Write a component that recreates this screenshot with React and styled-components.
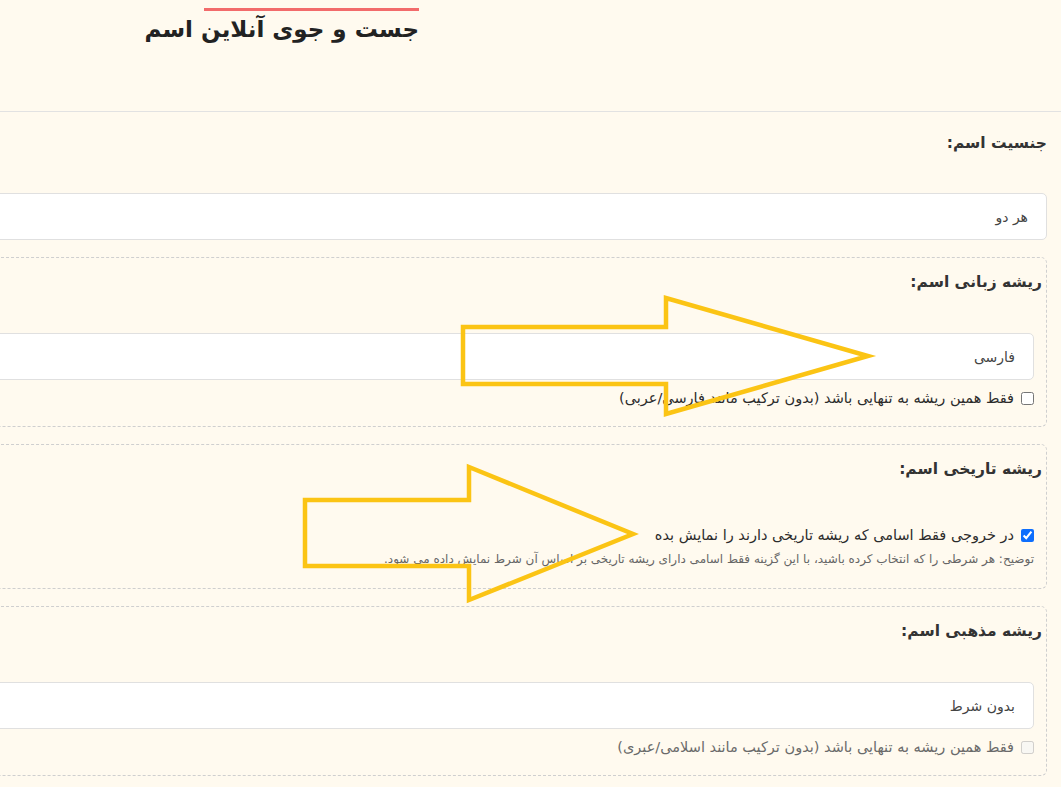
import React from "react";
import styled, { createGlobalStyle } from "styled-components";

const Global = createGlobalStyle`
  html, body { margin: 0; padding: 0; }
  body {
    background: #fffaef;
    font-family: "DejaVu Sans", "Noto Sans", sans-serif;
    overflow: hidden;
  }
`;

const Page = styled.div`
  position: relative;
  direction: rtl;
  width: 1061px;
  height: 787px;
  overflow: hidden;
  background: #fffaef;
`;

const Header = styled.header`
  height: 112px;
  border-bottom: 1px solid #e2e2e2;
  padding-top: 8px;
  padding-right: 642px;
  box-sizing: border-box;
  display: flex;
  align-items: flex-start;
`;

const TitleWrap = styled.div`
  display: flex;
  flex-direction: column;
  align-items: flex-start;
`;

const Bar = styled.span`
  display: block;
  width: 215px;
  height: 3px;
  background: #f26b6b;
`;

const TitleText = styled.h1`
  margin: 0;
  font-size: 23px;
  font-weight: bold;
  color: #222;
  line-height: 36px;
  white-space: nowrap;
`;

const Form = styled.div`
  margin-left: -40px;
  padding-right: 14px;
  padding-top: 19px;
  display: flex;
  flex-direction: column;
  gap: 17px;
`;

const Group = styled.div`
  display: flex;
  flex-direction: column;
`;

const Fieldset = styled.div`
  border: 1px dashed #cfcfcf;
  border-radius: 6px;
  padding: 12px 12px ${(p) => p.$pb || 20}px 0;
  display: flex;
  flex-direction: column;
`;

const Label = styled.div`
  font-size: 15.5px;
  font-weight: bold;
  color: #333;
  line-height: 24px;
  margin-bottom: ${(p) => p.$mb ?? 38}px;
  margin-right: ${(p) => p.$mr || 0}px;
  white-space: nowrap;
`;

const Field = styled.div`
  height: 47px;
  box-sizing: border-box;
  background: #fff;
  border: 1px solid #e0e0e0;
  border-radius: 5px;
  padding-right: 18px;
  display: flex;
  align-items: center;
  font-size: 14px;
  color: #444;
`;

const CheckRow = styled.label`
  display: flex;
  align-items: center;
  gap: 7px;
  margin-top: ${(p) => p.$mt ?? 9}px;
  line-height: 18px;
  font-size: 14.5px;
  color: ${(p) => (p.$disabled ? "#6a6a6a" : "#2b2b2b")};
  white-space: nowrap;
`;

const Box = styled.input`
  width: 13px;
  height: 13px;
  margin: 0;
  accent-color: #0d6efd;
  flex-shrink: 0;
`;

const Note = styled.div`
  font-size: 12px;
  line-height: 18px;
  color: #666;
  margin-top: 6px;
  white-space: nowrap;
`;

const Overlay = styled.svg`
  position: absolute;
  left: 0;
  top: 0;
  pointer-events: none;
`;

export default function App() {
  return (
    <>
      <Global />
      <Page>
        <Header>
          <TitleWrap>
            <Bar />
            <TitleText>جست و جوی آنلاین اسم</TitleText>
          </TitleWrap>
        </Header>
        <Form>
          <Group>
            <Label>جنسیت اسم:</Label>
            <Field>هر دو</Field>
          </Group>
          <Fieldset $pb={19}>
            <Label $mr={-8} $mb={39}>ریشه زبانی اسم:</Label>
            <Field>فارسی</Field>
            <CheckRow>
              <Box type="checkbox" />
              فقط همین ریشه به تنهایی باشد (بدون ترکیب مانند فارسی/عربی)
            </CheckRow>
          </Fieldset>
          <Fieldset $pb={20}>
            <Label $mr={-8} $mb={0}>ریشه تاریخی اسم:</Label>
            <CheckRow $mt={45}>
              <Box type="checkbox" defaultChecked />
              در خروجی فقط اسامی که ریشه تاریخی دارند را نمایش بده
            </CheckRow>
            <Note>
              توضیح: هر شرطی را که انتخاب کرده باشید، با این گزینه فقط اسامی دارای ریشه تاریخی بر اساس آن شرط نمایش داده می شود.
            </Note>
          </Fieldset>
          <Fieldset $pb={19}>
            <Label $mr={-8} $mb={39}>ریشه مذهبی اسم:</Label>
            <Field>بدون شرط</Field>
            <CheckRow $disabled>
              <Box type="checkbox" disabled />
              فقط همین ریشه به تنهایی باشد (بدون ترکیب مانند اسلامی/عبری)
            </CheckRow>
          </Fieldset>
        </Form>
        <Overlay width="1061" height="787" viewBox="0 0 1061 787">
          <polygon
            points="463,327 666,327 666,298 868,356 666,414 666,384 463,384"
            fill="none"
            stroke="#fbc414"
            strokeWidth="4.5"
            strokeLinejoin="miter"
          />
          <polygon
            points="305,500 469,500 469,467 633,534 469,600 469,566 305,566"
            fill="none"
            stroke="#fbc414"
            strokeWidth="4.5"
            strokeLinejoin="miter"
          />
        </Overlay>
      </Page>
    </>
  );
}
